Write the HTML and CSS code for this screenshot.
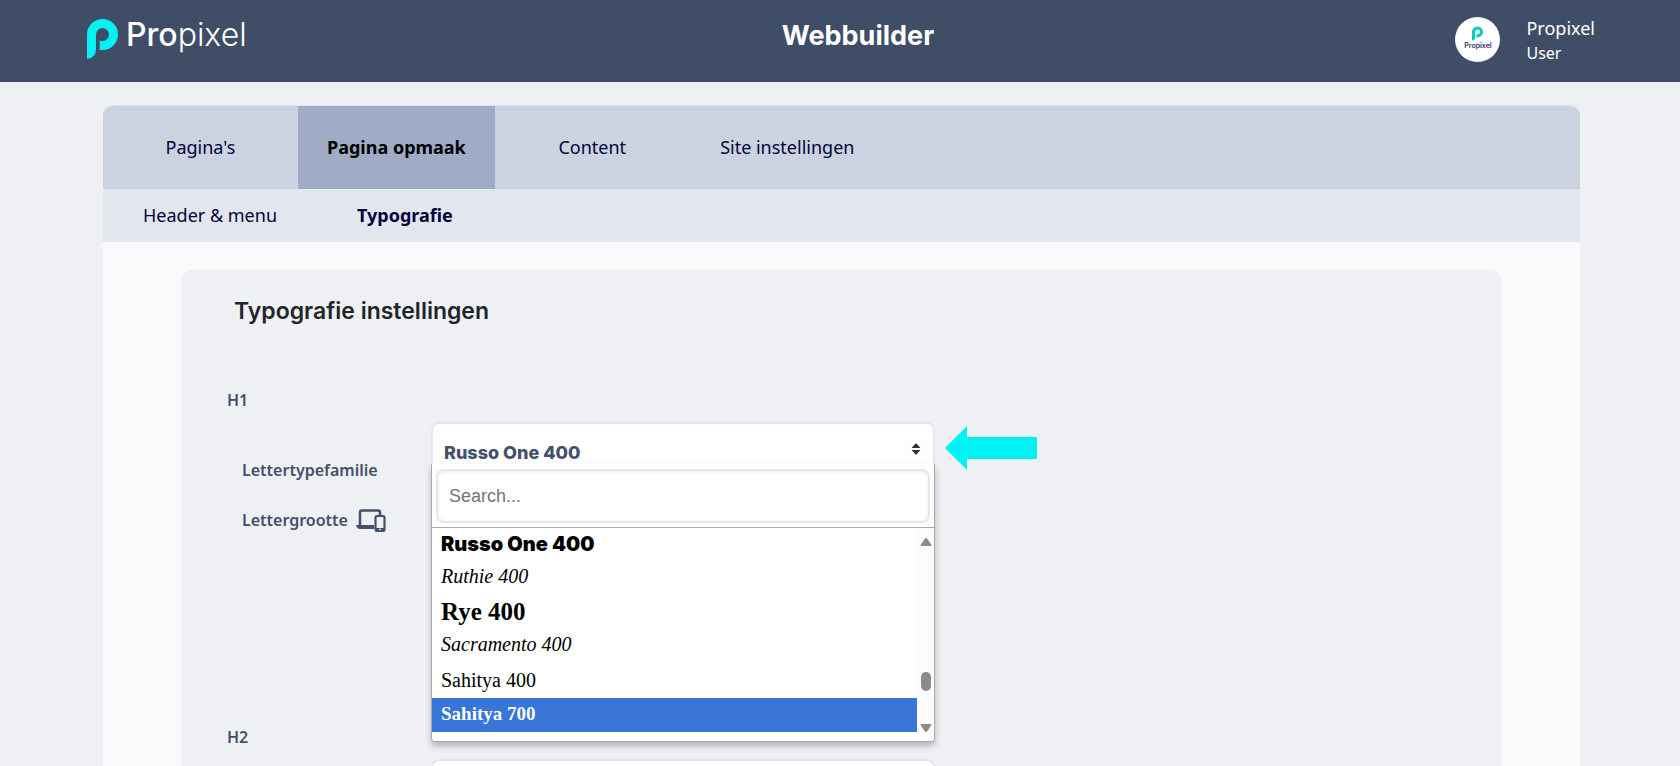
FILE: index.html
```
<!DOCTYPE html>
<html lang="nl">

<head>
    <meta charset="UTF-8">
    <meta name="viewport" content="width=device-width, initial-scale=1.0">
    <title>Webbuilder - Typografie</title>
    <link rel="stylesheet" href="styles.css">
</head>

<body>
    <header class="topbar">
        <a href="#" class="logo">
            <svg class="logo-icon" width="31" height="40" viewBox="0 0 31 40" aria-hidden="true">
                <path fill="#00f2f4" d="M0 40V15.500a15.500 15.500 0 1 1 15.500 15.500H12.700V21.500Q14 22 15.500 22A6.500 6.500 0 1 0 9 15.500V31Q8.500 39 0 40Z" />
            </svg>
            <span class="logo-text">Pro<span class="light">pixel</span></span>
        </a>
        <h1 class="site-title">Webbuilder</h1>
        <div class="user">
            <div class="avatar">
                <svg width="11" height="15" viewBox="0 0 31 40" aria-hidden="true">
                    <path fill="#0cc9c4" d="M0 40V15.500a15.500 15.500 0 1 1 15.500 15.500H12.700V21.500Q14 22 15.500 22A6.500 6.500 0 1 0 9 15.500V31Q8.500 39 0 40Z" />
                </svg>
                <span class="avatar-text">Propixel</span>
            </div>
            <div class="user-info">
                <div class="user-name">Propixel</div>
                <div class="user-role">User</div>
            </div>
        </div>
    </header>

    <main class="card">
        <nav class="tabs">
            <a href="#">Pagina's</a>
            <a href="#" class="active">Pagina opmaak</a>
            <a href="#">Content</a>
            <a href="#">Site instellingen</a>
        </nav>
        <nav class="subtabs">
            <a href="#">Header &amp; menu</a>
            <a href="#" class="active">Typografie</a>
        </nav>

        <form class="panel">
            <h2>Typografie instellingen</h2>

            <section class="group">
                <h3>H1</h3>
                <div class="group-body">
                    <div class="labels">
                        <label for="h1Font">Lettertypefamilie</label>
                        <span class="size-label">Lettergrootte
                            <svg width="30" height="23" viewBox="0 0 30 23" fill="none" stroke="#42506a" aria-hidden="true">
                                <path stroke-width="2.500" d="M4 16V3.500Q4 1.500 6 1.500H22Q24 1.500 24 3.500V6" />
                                <path fill="#42506a" stroke="none" d="M0 16H18V20H4Q1 20 0 16Z" />
                                <rect x="19.500" y="7" width="9" height="15" rx="1.500" stroke-width="2.200" />
                                <path stroke-width="3" d="M19.500 20.500H28.500" />
                                <path stroke="#eff0f4" stroke-width="1.500" d="M23.300 20.500h1.500" />
                            </svg>
                        </span>
                    </div>
                    <div class="picker">
                        <select id="h1Font" name="h1Font">
                            <option>Russo One 400</option>
                        </select>
                        <svg class="sort-icon" width="10" height="12" viewBox="0 0 10 12" aria-hidden="true">
                            <path fill="#333" d="M.500 5L4.300 .8Q5 0 5.700 .8L9.500 5ZM.500 7H9.500L5.700 11.200Q5 12 4.300 11.200Z" />
                        </svg>
                        <div class="dropdown">
                            <div class="search">
                                <input type="text" placeholder="Search..." aria-label="Search">
                            </div>
                            <div class="list">
                                <ul role="listbox" aria-label="Lettertypefamilie">
                                    <li role="option" class="russo">Russo One 400</li>
                                    <li role="option" class="ruthie">Ruthie 400</li>
                                    <li role="option" class="rye">Rye 400</li>
                                    <li role="option" class="sacramento">Sacramento 400</li>
                                    <li role="option" class="sahitya">Sahitya 400</li>
                                    <li role="option" class="sahitya selected" aria-selected="true">Sahitya 700</li>
                                </ul>
                                <div class="scrollbar">
                                    <svg width="12" height="10" viewBox="0 0 12 10" aria-hidden="true">
                                        <path fill="#8b8b8b" d="M.5 8L5 1.500Q6 .3 7 1.500L11.500 8Q11.500 9 10.500 9H1.500Q.5 9 .5 8Z" />
                                    </svg>
                                    <span class="thumb"></span>
                                    <svg width="12" height="10" viewBox="0 0 12 10" aria-hidden="true">
                                        <path fill="#8b8b8b" d="M.5 2L5 8.500Q6 9.700 7 8.500L11.500 2Q11.500 1 10.500 1H1.500Q.5 1 .5 2Z" />
                                    </svg>
                                </div>
                            </div>
                        </div>
                    </div>
                    <svg class="pointer" width="92" height="44" viewBox="0 0 92 44" aria-hidden="true">
                        <path fill="#00f2f4" d="M0 22L22 0V11H92V33H22V44Z" />
                    </svg>
                </div>
            </section>

            <section class="group">
                <h3>H2</h3>
                <div class="group-body">
                    <div class="labels"></div>
                    <div class="picker">
                        <select name="h2Font" aria-label="Lettertypefamilie"></select>
                    </div>
                </div>
            </section>
        </form>
    </main>
</body>

</html>
```
FILE: styles.css
```
* {
    box-sizing: border-box;
}

body {
    margin: 0;
    height: 100vh;
    display: flex;
    flex-direction: column;
    overflow: hidden;
    background-color: #eff0f4;
    font-family: "Noto Sans", sans-serif;
    font-size: 18px;
    color: #42506a;
}

a {
    color: inherit;
    text-decoration: none;
}

.topbar {
    display: grid;
    grid-template-columns: 1fr auto 1fr;
    flex-shrink: 0;
    align-items: start;
    height: 82px;
    padding: 17px 51px 0 87px;
    background-color: #404d66;
    color: #fff;
}

.logo {
    display: flex;
    gap: 8px;
}

.logo-icon {
    margin-top: 2px;
}

.logo-text {
    font-family: Inter, sans-serif;
    font-size: 32px;
    font-weight: 500;
    line-height: 36px;
}

.light {
    font-weight: 300;
}

.site-title {
    margin: 0;
    font-family: Inter, sans-serif;
    font-size: 27px;
    font-weight: 700;
    line-height: 38px;
}

.user {
    display: flex;
    justify-content: flex-end;
    gap: 26px;
    padding-right: 34px;
}

.avatar {
    display: flex;
    flex-direction: column;
    align-items: center;
    width: 45px;
    height: 45px;
    padding-top: 9px;
    border-radius: 50%;
    background-color: #fff;
}

.avatar-text {
    font-family: Inter, sans-serif;
    font-size: 7px;
    font-weight: 600;
    line-height: 9px;
    color: #302e6b;
}

.user-name {
    line-height: 22px;
}

.user-role {
    font-size: 16px;
    line-height: 28px;
}

.card {
    flex: 1;
    min-height: 0;
    margin: 23px 100px 0 103px;
    border-top: 1px solid #e2e6ef;
    border-radius: 10px 10px 0 0;
    background-color: #f9fafc;
    overflow: hidden;
}

.tabs,
.subtabs {
    display: flex;
    color: #040439;
}

.tabs {
    background-color: #cbd2e0;
}

.tabs a {
    min-width: 195px;
    padding: 0 29px;
    line-height: 83px;
    text-align: center;
}

.tabs .active {
    background-color: #a0acc5;
    color: #000;
    font-weight: 700;
}

.subtabs {
    background-color: #e2e7ef;
}

.subtabs a {
    padding: 0 40px;
    line-height: 53px;
}

.subtabs .active {
    font-weight: 700;
}

.panel {
    margin: 28px 79px 0 78px;
    padding: 24px 46px;
    border-radius: 10px;
    background-color: #eff0f4;
}

.panel h2 {
    margin: 0 0 60px;
    padding-left: 7px;
    font-family: Inter, sans-serif;
    font-size: 23px;
    font-weight: 600;
    line-height: 34px;
    color: #22262b;
}

.group {
    height: 337px;
}

.group h3 {
    margin: 0;
    font-size: 16px;
    font-weight: 600;
    line-height: 24px;
}

.group-body {
    display: flex;
    margin-top: 10px;
}

.labels {
    display: flex;
    flex-direction: column;
    gap: 26px;
    width: 204px;
    padding: 36px 0 0 15px;
    font-size: 16px;
    font-weight: 600;
    line-height: 24px;
}

.size-label {
    display: flex;
    align-items: center;
    gap: 8px;
}

.picker {
    position: relative;
    width: 504px;
}

.picker select {
    appearance: none;
    width: 100%;
    height: 60px;
    padding: 2px 11px;
    border: 2px solid #e2e7f1;
    border-radius: 8px;
    background-color: #fff;
    font-family: Inter, sans-serif;
    font-size: 18px;
    font-weight: 800;
    color: #42506a;
}

.sort-icon {
    position: absolute;
    top: 21px;
    right: 14px;
}

.dropdown {
    position: absolute;
    top: 42px;
    left: 0;
    right: 0;
    border: 1px solid #aaa;
    border-top: none;
    border-radius: 0 0 4px 4px;
    background-color: #fff;
    box-shadow: 0 4px 6px rgba(0, 0, 0, 0.25);
    overflow: hidden;
}

.search {
    padding: 5px 4px 4px;
    border-bottom: 1px solid #aaa;
}

.search input {
    display: block;
    width: 100%;
    height: 54px;
    padding: 0 11px;
    border: 2px solid #e2e7f1;
    border-radius: 8px;
    box-shadow: inset 0 1px 4px rgba(0, 0, 0, 0.08);
    font-family: "Liberation Sans", sans-serif;
    font-size: 18px;
}

.search input::placeholder {
    color: #757575;
}

.list {
    display: flex;
    height: 213px;
}

.list ul {
    flex: 1;
    margin: 0;
    padding: 0;
    list-style: none;
}

.list li {
    height: 34px;
    padding-left: 9px;
    line-height: 32px;
    font-size: 20px;
    color: #000;
}

.list .russo {
    font-family: Inter, sans-serif;
    font-weight: 900;
}

.list .ruthie,
.list .sacramento {
    font-family: "Liberation Serif", serif;
    font-style: italic;
    line-height: 28px;
}

.list .rye {
    font-family: "Liberation Serif", serif;
    font-size: 25px;
    font-weight: 700;
}

.list .sahitya {
    font-family: "Liberation Serif", serif;
}

.list .selected {
    background-color: #3875d7;
    color: #fff;
    font-size: 19px;
    font-weight: 700;
}

.scrollbar {
    display: flex;
    flex-direction: column;
    align-items: center;
    justify-content: space-between;
    width: 17px;
    padding: 9px 0 8px;
    background-color: #fcfcfc;
}

.thumb {
    width: 10px;
    height: 19px;
    margin-top: 92px;
    border-radius: 5px;
    background-color: #8b8b8b;
}

.pointer {
    margin: 4px 0 0 10px;
}
```
